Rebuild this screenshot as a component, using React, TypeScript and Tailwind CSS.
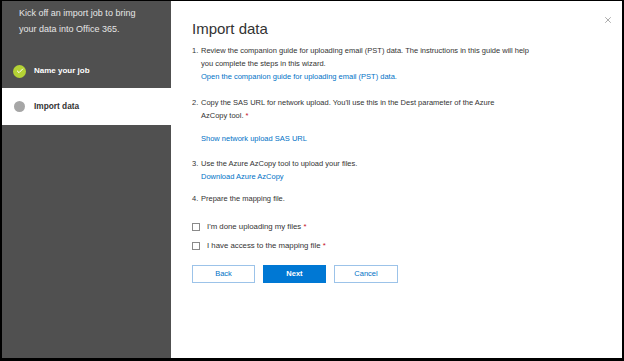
import { X, Check } from "lucide-react";

const font = { fontFamily: '"Liberation Sans Narrow", "Liberation Sans", sans-serif' };

const Req = () => <span className="text-[#c50f1f]"> *</span>;

const App = () => {
  return (
    <main
      className="h-[361px] w-[624px] bg-black pt-px pl-[2px] pr-[2px] pb-[3px]"
      style={font}
    >
      <div className="flex flex-row h-full">
        {/* SideBar */}
        <div className="flex flex-col w-[169px] h-full bg-[#505050]">
          <div className="pl-[17px] pt-[4px] h-[53px]">
            <p className="w-[125px] text-[9px] leading-[16px] text-[#e6e6e6]">
              Kick off an import job to bring your data into Office 365.
            </p>
          </div>
          <div className="flex items-center h-[34px] pl-[11px] gap-[8px]">
            <div className="flex items-center justify-center w-[13px] h-[13px] rounded-full bg-[#b4d235]">
              <Check className="w-[8px] h-[8px] text-white" strokeWidth={3} />
            </div>
            <span className="text-[8px] font-bold text-white">Name your job</span>
          </div>
          <div className="flex items-center h-[37px] pl-[12px] gap-[9px] bg-white">
            <div className="w-[11px] h-[11px] rounded-full bg-[#a6a6a6]" />
            <span className="text-[8.3px] font-bold text-[#333333]">Import data</span>
          </div>
        </div>
        {/* Main panel */}
        <div className="relative flex-1 h-full bg-white pl-[21px] pt-[15px] text-[7.5px] text-[#333333]">
          <X className="absolute right-[9px] top-[14px] w-[10px] h-[10px] text-[#7a7a7a]" strokeWidth={1.5} />
          <h1 className="text-[15px] leading-[26px] text-[#333333]">Import data</h1>
          <ol className="mt-[2px] w-[380px] leading-[13px]">
            <li>
              <div className="flex">
                <span className="w-[9px] shrink-0">1.</span>
                <span>
                  Review the companion guide for uploading email (PST) data. The instructions in this guide will help
                  <br />
                  you complete the steps in this wizard.
                </span>
              </div>
              <div className="pl-[9px] text-[#0072c6]">Open the companion guide for uploading email (PST) data.</div>
            </li>
            <li className="mt-[13px]">
              <div className="flex">
                <span className="w-[9px] shrink-0">2.</span>
                <span>
                  Copy the SAS URL for network upload. You'll use this in the Dest parameter of the Azure
                  <br />
                  AzCopy tool.
                  <Req />
                </span>
              </div>
              <div className="pl-[9px] mt-[10px] text-[#0072c6]">Show network upload SAS URL</div>
            </li>
            <li className="mt-[12px]">
              <div className="flex">
                <span className="w-[9px] shrink-0">3.</span>
                <span>Use the Azure AzCopy tool to upload your files.</span>
              </div>
              <div className="pl-[9px] text-[#0072c6]">Download Azure AzCopy</div>
            </li>
            <li className="mt-[9px]">
              <div className="flex">
                <span className="w-[9px] shrink-0">4.</span>
                <span>Prepare the mapping file.</span>
              </div>
            </li>
          </ol>
          <div className="mt-[15px] flex flex-col gap-[6px] text-[7.8px] leading-[13px]">
            <label className="flex items-center gap-[7px]">
              <span className="w-[8px] h-[8px] border border-[#8a8a8a] bg-white" />
              <span>
                I'm done uploading my files
                <Req />
              </span>
            </label>
            <label className="flex items-center gap-[7px]">
              <span className="w-[8px] h-[8px] border border-[#8a8a8a] bg-white" />
              <span>
                I have access to the mapping file
                <Req />
              </span>
            </label>
          </div>
          <div className="mt-[13px] flex gap-[8px] text-[7.5px]">
            <button className="w-[63px] h-[18px] border border-[#9cc3e9] text-[#0072c6] bg-white">Back</button>
            <button className="w-[63px] h-[18px] bg-[#0078d4] text-white font-bold">Next</button>
            <button className="w-[64px] h-[18px] border border-[#9cc3e9] text-[#0072c6] bg-white">Cancel</button>
          </div>
        </div>
      </div>
    </main>
  );
};

export default App;
